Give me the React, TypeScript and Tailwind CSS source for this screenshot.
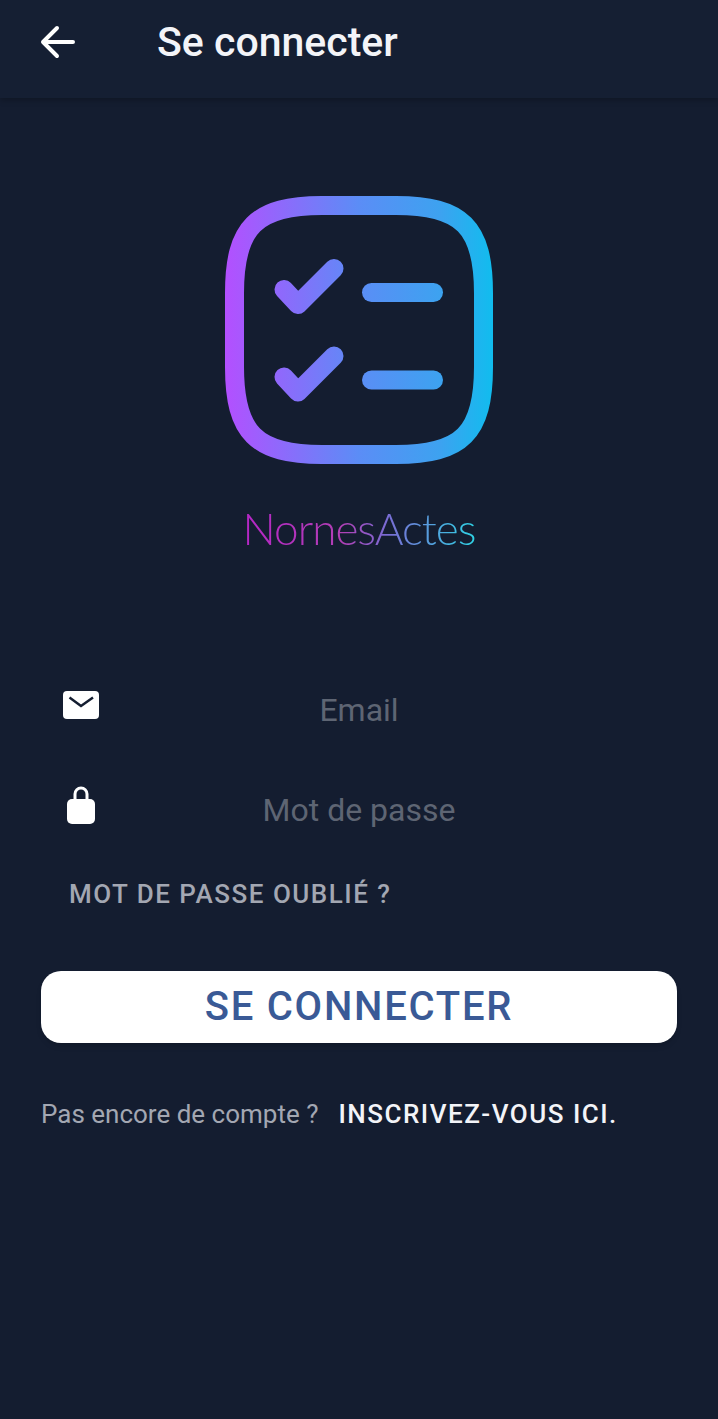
function Logo() {
  return (
    <svg width="270" height="270" viewBox="0 0 270 270" fill="none" className="block">
      <defs>
        <linearGradient id="logoGrad" gradientUnits="userSpaceOnUse" x1="0" y1="135" x2="270" y2="135">
          <stop offset="0" stopColor="#b44fff" />
          <stop offset="0.5" stopColor="#5b8df6" />
          <stop offset="0.8" stopColor="#3da2f0" />
          <stop offset="1" stopColor="#10bdee" />
        </linearGradient>
      </defs>
      <g stroke="url(#logoGrad)" strokeLinecap="round" strokeLinejoin="round">
        <path
          strokeWidth="19"
          d="M98 10.500H172C238 10.500 259.500 32 259.500 98V172C259.500 238 238 259.500 172 259.500H98C32 259.500 10.500 238 10.500 172V98C10.500 32 32 10.500 98 10.500Z"
        />
        <path strokeWidth="19" d="M60 94.500L74 109.500L110 73.500" />
        <path strokeWidth="19" d="M60 182L74 197L110 161" />
        <path strokeWidth="19" d="M147.500 97.500H209.500" />
        <path strokeWidth="19" d="M147.500 185H209.500" />
      </g>
    </svg>
  );
}

function App() {
  return (
    <div className="min-h-[1419px] bg-[#141d30] font-['Roboto',sans-serif]">
      {/* Header */}
      <header className="h-[98px] bg-[#151f33] shadow-[0_2px_6px_rgba(0,0,0,0.25)] flex items-center pl-[40px] pb-[14px]">
        <svg width="36" height="36" viewBox="0 0 36 36" fill="none" stroke="white" strokeWidth="4" strokeLinecap="round" strokeLinejoin="round">
          <path d="M3 18H33M17 4L3 18L17 32" />
        </svg>
        <h1 className="ml-[81px] mt-[2px] text-[41px] font-medium text-[#f3f4f8]">Se connecter</h1>
      </header>

      {/* Logo */}
      <div className="flex flex-col items-center pt-[97px]">
        <Logo />
        <div className="mt-[36px] text-[44px] leading-[54px] tracking-[-1px] font-light font-['Lato',sans-serif] bg-[linear-gradient(90deg,#b526c6_0%,#b23fb5_42%,#7a6cd4_62%,#2fd3e6_100%)] bg-clip-text text-transparent">
          NornesActes
        </div>
      </div>

      {/* Form */}
      <form className="px-[41px] pt-[125px]">
        <div className="flex items-center h-[60px] relative">
          <svg className="absolute left-[22px] top-[11px]" width="36" height="29" viewBox="0 0 36 29">
            <rect x="0" y="0" width="36" height="28" rx="4" fill="white" />
            <path d="M6.500 6.500L18 15L30 6.500" fill="none" stroke="#141d30" strokeWidth="2.500" />
          </svg>
          <input placeholder="Email" className="w-full text-center text-[32px] bg-transparent outline-none text-white placeholder:text-[#5e6573]" />
        </div>
        <div className="flex items-center h-[60px] mt-[40px] relative">
          <svg className="absolute left-[26px] top-[6px]" width="28" height="38" viewBox="0 0 28 38">
            <path d="M8 16V8a6 6 0 0 1 12 0V16" fill="none" stroke="white" strokeWidth="3" />
            <rect x="0" y="13" width="28" height="25" rx="5" fill="white" />
          </svg>
          <input placeholder="Mot de passe" type="password" className="w-full text-center text-[32px] bg-transparent outline-none text-white placeholder:text-[#5e6573]" />
        </div>
        <a href="#" className="block mt-[35px] ml-[28px] text-[26px] font-medium tracking-[1.5px] text-[#a3a7b2]">
          MOT DE PASSE OUBLIÉ ?
        </a>
        <button type="button" className="mt-[57px] w-[636px] h-[72px] rounded-[20px] bg-white shadow-md text-[40px] font-medium tracking-[1.75px] text-[#3a5a96]">
          SE CONNECTER
        </button>
        <div className="mt-[52px] flex items-center">
          <span className="text-[26px] text-[#a3a7b2]">Pas encore de compte ?</span>
          <a href="#" className="ml-[20px] text-[26px] font-medium tracking-[1.5px] text-[#f3f4f8]">
            INSCRIVEZ-VOUS ICI.
          </a>
        </div>
      </form>
    </div>
  );
}

export default App;
